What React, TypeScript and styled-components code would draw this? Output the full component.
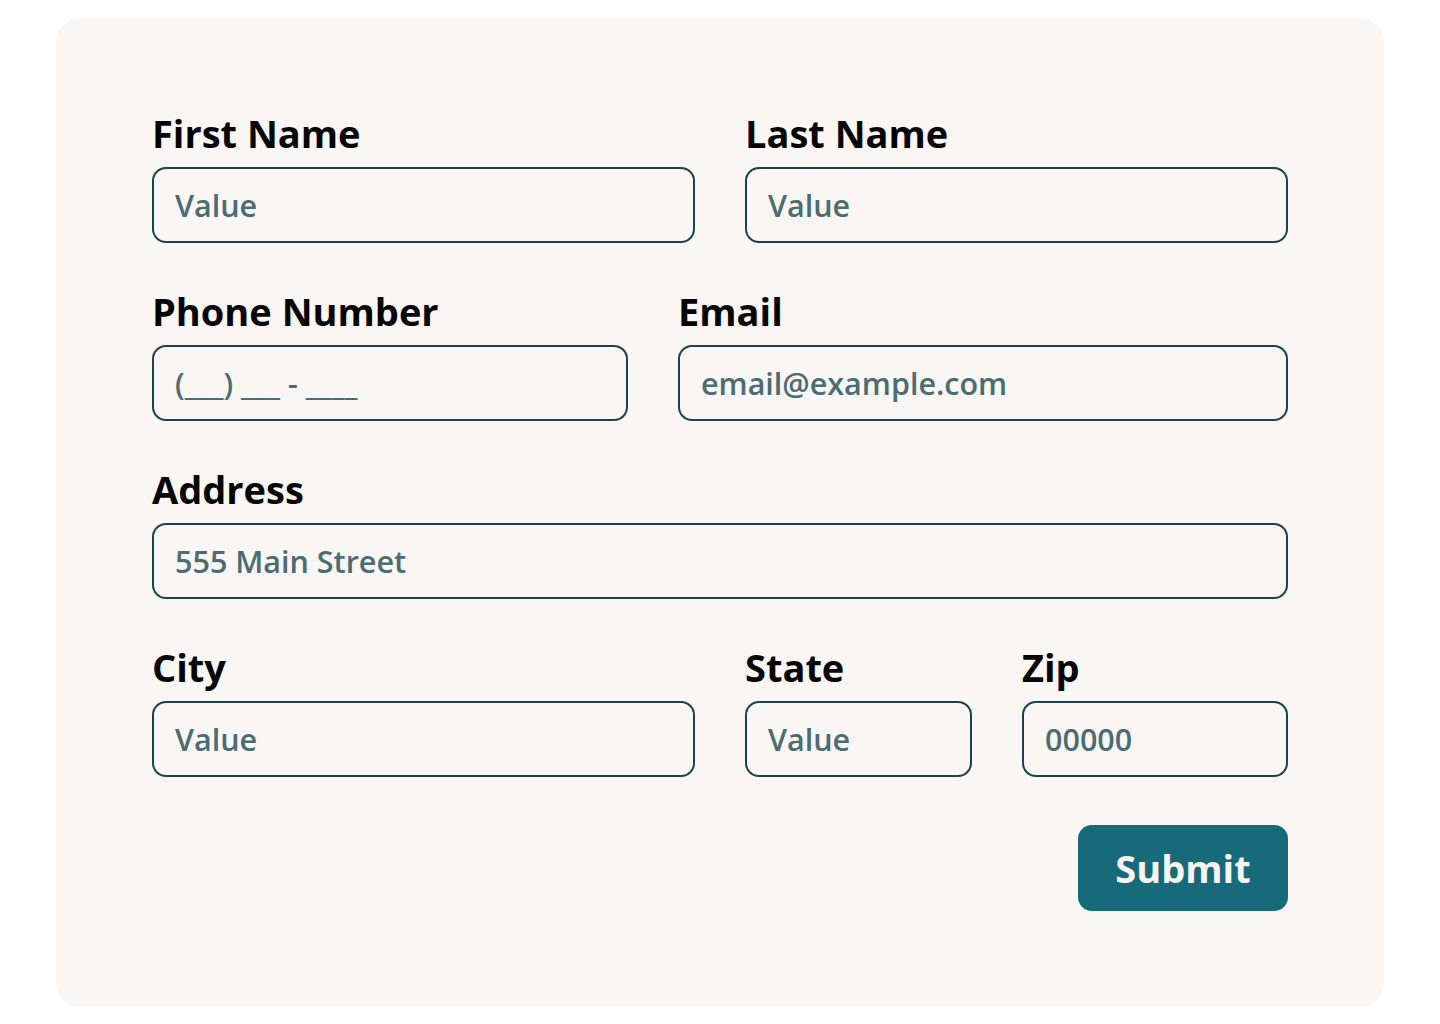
import styled, { createGlobalStyle } from 'styled-components';

const GlobalStyle = createGlobalStyle`
  * {
    box-sizing: border-box;
  }
  body {
    margin: 0;
    background: #ffffff;
    font-family: 'Open Sans', 'Noto Sans', sans-serif;
  }
`;

const styles = {
  card: styled.form`
    display: flex;
    flex-direction: column;
    margin: 18px 56px;
    padding: 92px 96px 96px;
    border-radius: 24px;
    background: #faf6f3;
  `,
  rows: styled.div`
    display: flex;
    flex-direction: column;
    gap: 45px;
  `,
  row: styled.div<{ $columns: string }>`
    display: grid;
    grid-template-columns: ${(p) => p.$columns};
    column-gap: 50px;
  `,
  field: styled.label`
    display: flex;
    flex-direction: column;
    gap: 11px;
  `,
  label: styled.span`
    color: #050505;
    font-size: 38px;
    font-weight: 700;
    line-height: 46px;
  `,
  input: styled.input`
    width: 100%;
    height: 76px;
    padding: 0 21px;
    border: 2px solid #1c424b;
    border-radius: 14px;
    background: transparent;
    color: #1c424b;
    font-family: 'Open Sans', 'Noto Sans', sans-serif;
    font-size: 30.5px;
    font-weight: 600;
    outline: none;

    &::placeholder {
      color: #4b6c72;
      opacity: 1;
    }
  `,
  actions: styled.div`
    display: flex;
    justify-content: flex-end;
    margin-top: 48px;
  `,
  submit: styled.button`
    width: 210px;
    height: 86px;
    border: none;
    border-radius: 14px;
    background: #176a79;
    color: #f8f4f0;
    font-family: 'Open Sans', 'Noto Sans', sans-serif;
    font-size: 38px;
    font-weight: 700;
    cursor: pointer;
  `,
};

function Field({ label, placeholder }: { label: string; placeholder: string }) {
  return (
    <styles.field>
      <styles.label>{label}</styles.label>
      <styles.input placeholder={placeholder} />
    </styles.field>
  );
}

export default function App() {
  return (
    <>
      <GlobalStyle />
      <styles.card onSubmit={(e) => e.preventDefault()}>
        <styles.rows>
          <styles.row $columns="1fr 1fr">
            <Field label="First Name" placeholder="Value" />
            <Field label="Last Name" placeholder="Value" />
          </styles.row>
          <styles.row $columns="476fr 610fr">
            <Field label="Phone Number" placeholder="(___) ___ - ____" />
            <Field label="Email" placeholder="email@example.com" />
          </styles.row>
          <styles.row $columns="1fr">
            <Field label="Address" placeholder="555 Main Street" />
          </styles.row>
          <styles.row $columns="543fr 227fr 266fr">
            <Field label="City" placeholder="Value" />
            <Field label="State" placeholder="Value" />
            <Field label="Zip" placeholder="00000" />
          </styles.row>
        </styles.rows>
        <styles.actions>
          <styles.submit type="submit">Submit</styles.submit>
        </styles.actions>
      </styles.card>
    </>
  );
}
